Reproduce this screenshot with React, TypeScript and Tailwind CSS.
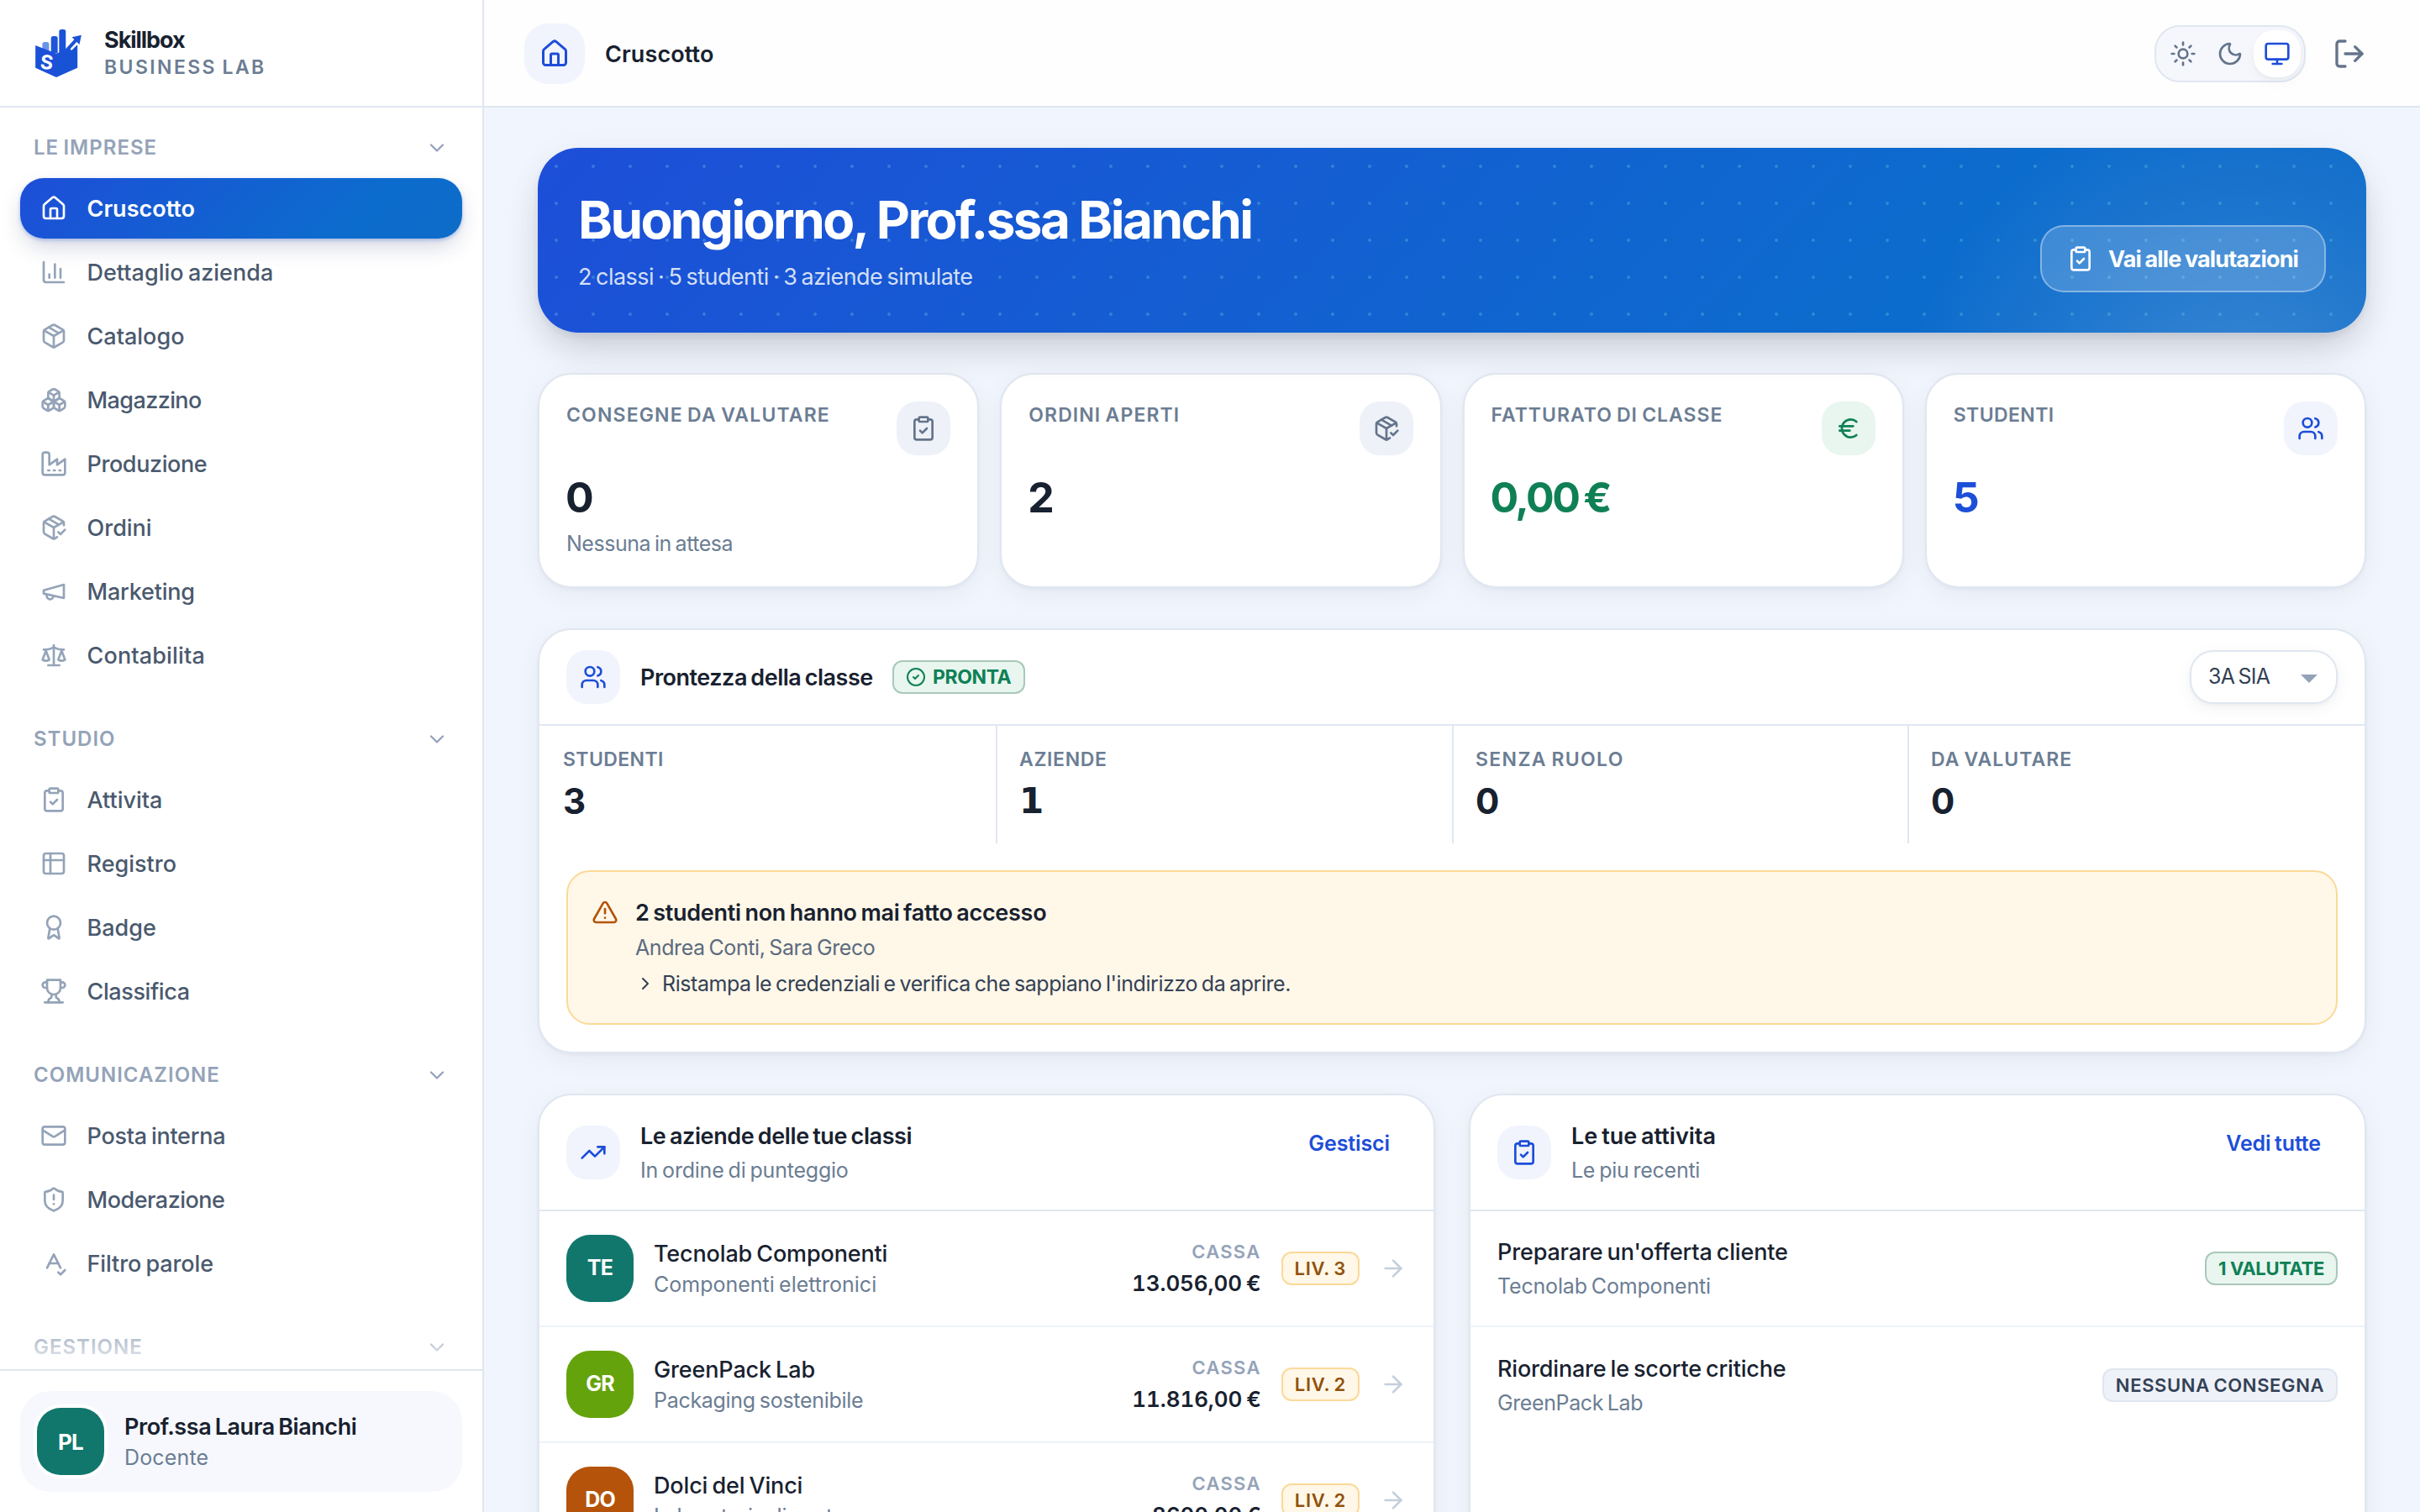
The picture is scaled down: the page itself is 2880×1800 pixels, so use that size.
import React from "react";
import {
  ArrowRight, Award, Boxes, ChartColumn, ChevronDown, ChevronRight, CircleCheck, ClipboardCheck, Euro,
  House, LogOut, Mail, Monitor, Moon, Package, PackageCheck, ShieldAlert, SpellCheck, Sun,
  TrendingUp, TriangleAlert, Users,
} from "lucide-react";

type IconProps = { className?: string; strokeWidth?: number };

function Glyph({ paths, className, strokeWidth = 2, children }: IconProps & { paths: string[]; children?: React.ReactNode }) {
  return (
    <svg viewBox="0 0 24 24" fill="none" stroke="currentColor" strokeWidth={strokeWidth} strokeLinecap="round" strokeLinejoin="round" className={className}>
      {children}
      {paths.map((d) => <path key={d} d={d} />)}
    </svg>
  );
}

const Factory = (p: IconProps) => (
  <Glyph {...p} paths={["M2 20a2 2 0 0 0 2 2h16a2 2 0 0 0 2-2V8l-7 5V8l-7 5V4a2 2 0 0 0-2-2H4a2 2 0 0 0-2 2Z", "M17 18h1", "M12 18h1", "M7 18h1"]} />
);
const Megaphone = (p: IconProps) => (
  <Glyph {...p} paths={["m3 11 18-5v12L3 14v-3z", "M11.6 16.8a3 3 0 1 1-5.8-1.6"]} />
);
const Scale = (p: IconProps) => (
  <Glyph {...p} paths={["m16 16 3-8 3 8c-.87.65-1.92 1-3 1s-2.13-.35-3-1Z", "m2 16 3-8 3 8c-.87.65-1.92 1-3 1s-2.13-.35-3-1Z", "M7 21h10", "M12 3v18", "M3 7h2c2 0 5-1 7-2 2 1 5 2 7 2h2"]} />
);
const Register = (p: IconProps) => (
  <Glyph {...p} paths={["M3 9h18", "M9 3v18"]}><rect x="3" y="3" width="18" height="18" rx="2" /></Glyph>
);
const Trophy = (p: IconProps) => (
  <Glyph {...p} paths={["M6 9H4.5a2.5 2.5 0 0 1 0-5H6", "M18 9h1.5a2.5 2.5 0 0 0 0-5H18", "M4 22h16", "M10 14.66V17c0 .55-.47.98-.97 1.21C7.85 18.75 7 20.24 7 22", "M14 14.66V17c0 .55.47.98.97 1.21C16.15 18.75 17 20.24 17 22", "M18 2H6v7a6 6 0 0 0 12 0V2Z"]} />
);

const sections: { title: string; items: { label: string; icon: React.ElementType; active?: boolean; track?: string }[] }[] = [
  {
    title: "LE IMPRESE",
    items: [
      { label: "Cruscotto", icon: House, active: true },
      { label: "Dettaglio azienda", icon: ChartColumn },
      { label: "Catalogo", icon: Package },
      { label: "Magazzino", icon: Boxes, track: "tracking-[-0.6px]" },
      { label: "Produzione", icon: Factory, track: "tracking-[-0.4px]" },
      { label: "Ordini", icon: PackageCheck },
      { label: "Marketing", icon: Megaphone, track: "tracking-[-0.2px]" },
      { label: "Contabilita", icon: Scale, track: "tracking-[0.15px]" },
    ],
  },
  {
    title: "STUDIO",
    items: [
      { label: "Attivita", icon: ClipboardCheck },
      { label: "Registro", icon: Register },
      { label: "Badge", icon: Award },
      { label: "Classifica", icon: Trophy, track: "tracking-[-0.4px]" },
    ],
  },
  {
    title: "COMUNICAZIONE",
    items: [
      { label: "Posta interna", icon: Mail, track: "tracking-[-0.26px]" },
      { label: "Moderazione", icon: ShieldAlert, track: "tracking-[-0.5px]" },
      { label: "Filtro parole", icon: SpellCheck, track: "tracking-[-0.1px]" },
    ],
  },
  { title: "GESTIONE", items: [] },
];

function Logo() {
  return (
    <svg viewBox="0 0 165 172" className="h-[57px] w-[55px]">
      <path d="M25 80V53q0-8 8-8h8q8 0 8 8v27z" fill="#6a93ea" />
      <path d="M56 84V32q0-8 8-8h8q8 0 8 8v54z" fill="#1f55da" />
      <path d="M85 88V8q0-8 8-8h8q8 0 8 8v70z" fill="#1a52d8" />
      <path d="M0 57 75 87v85L0 138z" fill="#1c50d8" />
      <path d="M75 87 109 75 151 56v82l-76 34z" fill="#1853d6" />
      <path d="M122 68 142 48" stroke="#fff" strokeWidth="22" />
      <path d="M104 84 146 38" stroke="#1a52d8" strokeWidth="12" />
      <path d="M165 20 131 28 158 54z" fill="#1a52d8" />
      <text x="18" y="143" fontFamily="Inter" fontWeight="700" fontSize="70" fill="#fff" transform="rotate(6 40 118)">S</text>
    </svg>
  );
}

function Sidebar() {
  return (
    <aside className="flex w-[576px] shrink-0 flex-col border-r-2 border-[#e0e7f0] bg-white">
      <div className="flex h-[128px] shrink-0 items-center gap-[27px] border-b-2 border-[#e0e7f0] pl-[42px]">
        <Logo />
        <div className="pt-[2px] leading-[33px]">
          <div className="text-[27px] font-bold tracking-[-1.05px] text-[#18212f]">Skillbox</div>
          <div className="text-[23px] font-semibold tracking-[2.4px] text-[#6b7d93]">BUSINESS LAB</div>
        </div>
      </div>
      <div className="relative min-h-0 flex-1 overflow-hidden px-6 pt-5">
        {sections.map((s) => (
          <div key={s.title} className="mb-9">
            <div className="mb-2 flex h-14 items-center justify-between pr-4 pl-4 text-[#94a3b8]">
              <span className="text-[24px] font-semibold tracking-[1px]">{s.title}</span>
              <ChevronDown className="size-7" />
            </div>
            <div className="flex flex-col gap-1">
              {s.items.map(({ label, icon: Icon, active, track }) => (
                <div
                  key={label}
                  className={
                    active
                      ? "flex h-[72px] items-center gap-[23.5px] rounded-[28px] bg-linear-[135deg,#1d4ed8,#0c6ccd_75%,#0e6cc8] pl-6 font-semibold text-white shadow-[0_2px_4px_rgba(29,78,216,0.3),0_12px_28px_-4px_rgba(15,35,90,0.2)]"
                      : "flex h-[72px] items-center gap-[23.5px] rounded-[28px] pl-6 font-medium text-[#4a596e]"
                  }
                >
                  <Icon className={active ? "size-8" : "size-8 text-[#94a3b8]"} strokeWidth={2} />
                  <span className={track ? `pt-[2px] text-[27px] ${track}` : "pt-[2px] text-[27px]"}>{label}</span>
                </div>
              ))}
            </div>
          </div>
        ))}
        <div className="absolute inset-x-0 bottom-0 h-14 bg-linear-to-t from-white/90 to-white/0" />
      </div>
      <div className="h-[170px] shrink-0 border-t-2 border-[#e0e7f0] px-6 pt-6">
        <div className="flex h-[120px] items-center gap-6 rounded-[36px] bg-[#f6f8fd] pl-5">
          <Avatar text="PL" className="bg-[#11776d] text-[26px] ring-4 ring-white" />
          <div className="pt-[2px] leading-[37px]">
            <div className="text-[27px] font-semibold tracking-[-0.44px] text-[#18212f]">Prof.ssa Laura Bianchi</div>
            <div className="text-[25px] tracking-[0.15px] text-[#6b7d93]">Docente</div>
          </div>
        </div>
      </div>
    </aside>
  );
}

function Avatar({ text, className }: { text: string; className: string }) {
  return <div className={`flex size-20 shrink-0 items-center justify-center rounded-[28px] font-bold tracking-[-0.8px] text-white ${className}`}>{text}</div>;
}

function Topbar() {
  return (
    <header className="flex h-[128px] shrink-0 items-center border-b-2 border-[#e0e7f0] bg-[#fefefe] pt-[2px] pr-16 pl-12">
      <div className="flex size-[72px] items-center justify-center rounded-[28px] bg-[#f1f4fd] text-[#1d4ed8]">
        <House className="size-9" />
      </div>
      <h1 className="ml-6 pt-[2px] text-[27px] font-semibold tracking-[0.1px] text-[#18212f]">Cruscotto</h1>
      <div className="ml-auto flex h-[68px] items-center rounded-[30px] border-2 border-[#e0e7f0] bg-[#f5f7fc] p-1 text-[#64748b]">
        <div className="flex size-14 items-center justify-center"><Sun className="size-8" /></div>
        <div className="flex size-14 items-center justify-center"><Moon className="size-8" /></div>
        <div className="flex size-14 items-center justify-center rounded-3xl bg-white text-[#1d4ed8] shadow-[0_2px_4px_rgba(15,23,42,0.03),0_6px_16px_rgba(15,23,42,0.04)]">
          <Monitor className="size-8" />
        </div>
      </div>
      <LogOut className="ml-8 size-10 text-[#64748b]" />
    </header>
  );
}

function Banner() {
  return (
    <section className="relative z-10 flex h-[220px] shrink-0 items-end justify-between rounded-[48px] bg-[radial-gradient(circle,rgba(110,205,230,0.32)_1.5px,transparent_2.3px),radial-gradient(circle_at_93%_150%,rgba(255,255,255,0.2),rgba(255,255,255,0.07)_240px,transparent_400px),linear-gradient(135deg,#1d4ed8,#0c6ccd_75%,#0e6cc8)] bg-[size:44px_44px,100%_100%,100%_100%] p-12 text-white shadow-[0_4px_8px_rgba(15,23,42,0.06),0_24px_48px_-12px_rgba(15,23,42,0.2),0_8px_48px_rgba(15,23,42,0.04)]">
      <div>
        <h2 className="text-[62px] leading-[75px] font-[750] tracking-[-2.6px] [word-spacing:0px]!">Buongiorno, Prof.ssa Bianchi</h2>
        <p className="mt-2.5 -mb-0.5 text-[27px] leading-[41px] tracking-[-0.55px] text-[#d3dff6]">2 classi · 5 studenti · 3 aziende simulate</p>
      </div>
      <div className="flex h-20 w-[340px] items-center gap-[17px] rounded-[28px] border-2 border-white/35 bg-white/18 pl-[30px]">
        <ClipboardCheck className="size-8" />
        <span className="pt-[2px] text-[27px] font-bold tracking-[-0.9px] [word-spacing:-0.8px]!">Vai alle valutazioni</span>
      </div>
    </section>
  );
}

const stats = [
  { label: "CONSEGNE DA VALUTARE", track: "tracking-[1.15px]", value: "0", note: "Nessuna in attesa", icon: ClipboardCheck, tile: "bg-[#eef1f8] text-[#64748b]", tone: "text-[#18212f]" },
  { label: "ORDINI APERTI", track: "tracking-[1.1px]", value: "2", icon: PackageCheck, tile: "bg-[#eef1f8] text-[#64748b]", tone: "text-[#18212f]" },
  { label: "FATTURATO DI CLASSE", track: "tracking-[1px]", value: "0,00 €", icon: Euro, tile: "bg-[#e8f6ef] text-[#0f8055]", tone: "text-[#0f8055]" },
  { label: "STUDENTI", track: "tracking-[0.4px]", value: "5", icon: Users, tile: "bg-[#f1f4fd] text-[#1d4ed8]", tone: "text-[#1d4ed8]" },
];

const card = "rounded-[40px] border-2 border-[#e0e7f0] bg-white shadow-[0_2px_4px_rgba(15,23,42,0.04),0_8px_32px_rgba(15,23,42,0.05)]";

function Stats() {
  return (
    <section className="grid shrink-0 grid-cols-4 gap-[25px]">
      {stats.map(({ label, track, value, note, icon: Icon, tile, tone }) => (
        <div key={label} className={`h-64 p-8 ${card}`}>
          <div className="flex justify-between">
            <span className={`text-[23px] leading-8 font-semibold text-[#6b7d93] ${track}`}>{label}</span>
            <div className={`flex size-16 shrink-0 items-center justify-center rounded-3xl ${tile}`}><Icon className="size-8" /></div>
          </div>
          <div className={`mt-5 -ml-px text-[50px] leading-[60px] font-bold tracking-[-2.5px] ${tone}`}>{value}</div>
          {note && <div className="mt-[7px] text-[25px] leading-9 tracking-[-0.47px] text-[#6b7d93]">{note}</div>}
        </div>
      ))}
    </section>
  );
}

const kpis = [
  { label: "STUDENTI", value: "3", track: "tracking-[0.4px]", font: "" },
  { label: "AZIENDE", value: "1", track: "tracking-[0.67px]", font: "font-['DejaVu_Sans']" },
  { label: "SENZA RUOLO", value: "0", track: "tracking-[1.36px]", font: "" },
  { label: "DA VALUTARE", value: "0", track: "tracking-[1px]", font: "" },
];

function Readiness() {
  return (
    <section className={`shrink-0 ${card}`}>
      <div className="flex h-[114px] items-center border-b-2 border-[#e0e7f0] px-8">
        <div className="flex size-16 items-center justify-center rounded-3xl bg-[#f1f4fd] text-[#1d4ed8]"><Users className="size-8" /></div>
        <h3 className="ml-6 w-[276px] pt-[2px] text-[27px] font-semibold tracking-[-0.49px] whitespace-nowrap text-[#18212f]">Prontezza della classe</h3>
        <span className="ml-6 flex h-10 w-[158px] items-center gap-2 rounded-xl border-2 border-[#a9c8ba] bg-[#e8f6ef] pl-[14px] text-[#0f8055]">
          <CircleCheck className="size-6" />
          <span className="text-[23px] font-bold tracking-[-0.4px]">PRONTA</span>
        </span>
        <div className="ml-auto flex h-16 w-[176px] items-center justify-between rounded-[28px] border-2 border-[#e0e7f0] bg-white pr-[22px] pl-5 shadow-[0_2px_4px_rgba(15,23,42,0.04),0_6px_20px_rgba(15,23,42,0.05)]">
          <span className="text-[25px] tracking-[-0.8px] text-[#334155]">3A SIA</span>
          <svg viewBox="0 0 20 10" className="mt-[3px] h-[10px] w-5 fill-[#94a3b8]"><path d="M0 0h20L10 10z" /></svg>
        </div>
      </div>
      <div className="grid h-[140px] grid-cols-[543px_543px_542px_544px]">
        {kpis.map((k) => (
          <div key={k.label} className="border-[#e0e7f0] pt-6 pl-7 not-first:border-l-2 not-first:pl-[26px]">
            <div className={`text-[23px] leading-8 font-semibold text-[#6b7d93] ${k.track}`}>{k.label}</div>
            <div className={`mt-[7px] text-[42px] leading-[54px] font-bold text-[#18212f] ${k.font}`}>{k.value}</div>
          </div>
        ))}
      </div>
      <div className="mx-8 mt-8 mb-8 flex h-[184px] gap-5 rounded-[28px] border-2 border-[#fbd998] bg-[#fff7e8] pt-7 pl-7">
        <TriangleAlert className="mt-1 size-8 text-[#b45309]" />
        <div className="pt-px">
          <div className="text-[27px] leading-10 font-semibold tracking-[-0.28px] text-[#18212f]">2 studenti non hanno mai fatto accesso</div>
          <div className="text-[25px] leading-[42px] tracking-[-0.42px] text-[#5b6b80]">Andrea Conti, Sara Greco</div>
          <div className="flex items-center gap-2 text-[25px] leading-[44px] tracking-[-0.44px] text-[#334155]">
            <ChevronRight className="size-6" />
            <span>Ristampa le credenziali e verifica che sappiano l'indirizzo da aprire.</span>
          </div>
        </div>
      </div>
    </section>
  );
}

function PanelHead({ icon: Icon, title, titleTrack, sub, subTrack, action }: { icon: React.ElementType; title: string; titleTrack: string; sub: string; subTrack: string; action: string }) {
  return (
    <div className="flex h-[138px] items-center border-b-2 border-[#e0e7f0] px-8">
      <div className="flex size-16 items-center justify-center rounded-3xl bg-[#f1f4fd] text-[#1d4ed8]"><Icon className="size-8" /></div>
      <div className="ml-6 pt-[2px] leading-10">
        <h3 className={`text-[27px] font-semibold text-[#18212f] ${titleTrack}`}>{title}</h3>
        <p className={`text-[25px] text-[#6b7d93] ${subTrack}`}>{sub}</p>
      </div>
      <span className="mr-5 mb-5 ml-auto text-[25px] font-semibold tracking-[-0.1px] text-[#1d4ed8]">{action}</span>
    </div>
  );
}

const companies = [
  { code: "TE", color: "bg-[#11776d]", name: "Tecnolab Componenti", field: "Componenti elettronici", fieldTrack: "tracking-[0px]", cash: "13.056,00 €", level: "LIV. 3" },
  { code: "GR", color: "bg-[#65a30d]", name: "GreenPack Lab", field: "Packaging sostenibile", fieldTrack: "tracking-[-0.3px]", cash: "11.816,00 €", level: "LIV. 2" },
  { code: "DO", color: "bg-[#b45309]", name: "Dolci del Vinci", field: "Laboratorio di pasta", fieldTrack: "tracking-[-0.3px]", cash: "8600,00 €", level: "LIV. 2" },
];

function Companies() {
  return (
    <section className={`h-[600px] ${card}`}>
      <PanelHead icon={TrendingUp} title="Le aziende delle tue classi" titleTrack="tracking-[-0.4px]" sub="In ordine di punteggio" subTrack="tracking-[-0.22px]" action="Gestisci" />
      {companies.map((c) => (
        <div key={c.code} className="flex h-[138px] items-center border-b-2 border-[#eef2f8] px-8">
          <Avatar text={c.code} className={`text-[25px] ${c.color}`} />
          <div className="ml-6 pt-[2px] leading-[37px]">
            <div className="text-[27px] font-medium tracking-[-0.15px] text-[#18212f]">{c.name}</div>
            <div className={`text-[25px] text-[#6b7d93] ${c.fieldTrack}`}>{c.field}</div>
          </div>
          <div className="ml-auto pb-[2px] text-right leading-[37px]">
            <div className="text-[22px] font-semibold tracking-[1.3px] text-[#94a3b8]">CASSA</div>
            <div className="text-[26px] font-semibold tracking-[-0.1px] text-[#18212f] tabular-nums">{c.cash}</div>
          </div>
          <span className="ml-6 flex h-10 items-center rounded-xl border-2 border-[#fbd998] bg-[#fff7e8] px-[14px] text-[22px] font-semibold tracking-[0.75px] text-[#8f520c]">{c.level}</span>
          <ArrowRight className="ml-6 size-8 text-[#c5cfdc]" />
        </div>
      ))}
    </section>
  );
}

function Activities() {
  return (
    <section className={`h-[600px] ${card}`}>
      <PanelHead icon={ClipboardCheck} title="Le tue attivita" titleTrack="tracking-[0px]" sub="Le piu recenti" subTrack="tracking-[-0.27px]" action="Vedi tutte" />
      <div className="flex h-[138px] items-center justify-between border-b-2 border-[#eef2f8] px-8">
        <div className="pt-px leading-10">
          <div className="text-[27px] font-medium tracking-[-0.16px] text-[#18212f]">Preparare un'offerta cliente</div>
          <div className="text-[25px] tracking-[-0.18px] text-[#6b7d93]">Tecnolab Componenti</div>
        </div>
        <span className="flex h-10 w-[158px] items-center justify-center rounded-xl border-2 border-[#a9c8ba] bg-[#e8f6ef] text-[22px] font-bold tracking-[-0.35px] text-[#0f8055] [word-spacing:0px]!">1 VALUTATE</span>
      </div>
      <div className="flex h-[138px] items-center justify-between px-8">
        <div className="pt-px leading-10">
          <div className="text-[27px] font-medium tracking-[-0.19px] text-[#18212f]">Riordinare le scorte critiche</div>
          <div className="text-[25px] tracking-[-0.4px] text-[#6b7d93]">GreenPack Lab</div>
        </div>
        <span className="flex h-10 w-[280px] items-center justify-center rounded-xl border-2 border-[#dfe6f0] bg-[#eef1f8] text-[22px] font-semibold tracking-[0.63px] text-[#334155]">NESSUNA CONSEGNA</span>
      </div>
    </section>
  );
}

export default function App() {
  return (
    <div className="flex h-[1800px] w-[2880px] overflow-hidden bg-[#f1f5fd] font-['Inter',sans-serif] **:[word-spacing:-0.07em]">
      <Sidebar />
      <div className="flex min-w-0 flex-1 flex-col">
        <Topbar />
        <main className="flex min-h-0 flex-1 flex-col gap-12 overflow-hidden px-16 pt-12">
          <Banner />
          <Stats />
          <Readiness />
          <div className="grid shrink-0 grid-cols-2 gap-10">
            <Companies />
            <Activities />
          </div>
        </main>
      </div>
    </div>
  );
}
